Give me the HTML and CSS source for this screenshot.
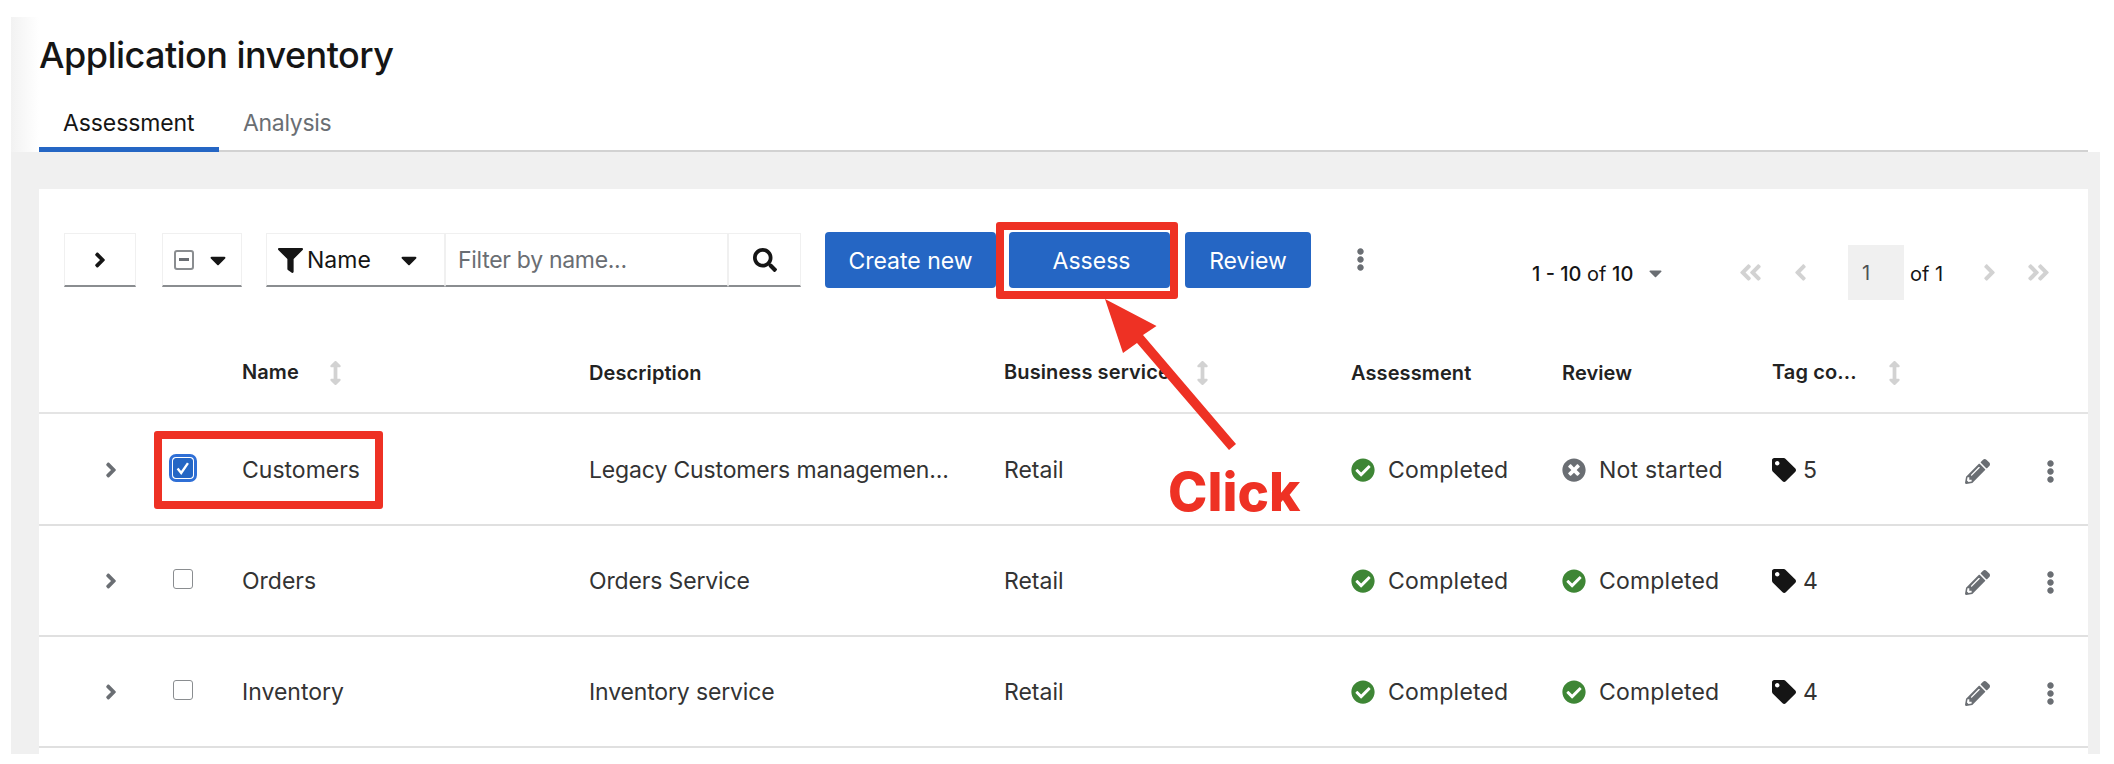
FILE: index.html
```html
<!DOCTYPE html>
<html lang="en">
<head>
    <meta charset="UTF-8">
    <title>Application inventory</title>
    <link rel="stylesheet" href="styles.css">
</head>
<body>
    <svg class="icon-defs" xmlns="http://www.w3.org/2000/svg">
        <symbol id="i-angle-right" viewBox="0 0 256 512"><path d="M224.3 273l-136 136c-9.4 9.4-24.6 9.4-33.9 0l-22.6-22.6c-9.4-9.4-9.4-24.6 0-33.9l96.4-96.4-96.4-96.4c-9.4-9.4-9.4-24.6 0-33.9L54.3 103c9.4-9.4 24.6-9.4 33.9 0l136 136c9.5 9.4 9.5 24.6.1 34z"/></symbol>
        <symbol id="i-angle-left" viewBox="0 0 256 512"><path d="M31.7 239l136-136c9.4-9.4 24.6-9.4 33.9 0l22.6 22.6c9.4 9.4 9.4 24.6 0 33.9L127.9 256l96.4 96.4c9.4 9.4 9.4 24.6 0 33.9L201.7 409c-9.4 9.4-24.6 9.4-33.9 0l-136-136c-9.5-9.4-9.5-24.6-.1-34z"/></symbol>
        <symbol id="i-double-left" viewBox="0 0 448 512"><path d="M223.7 239l136-136c9.4-9.4 24.6-9.4 33.9 0l22.6 22.6c9.4 9.4 9.4 24.6 0 33.9L319.9 256l96.4 96.4c9.4 9.4 9.4 24.6 0 33.9L393.7 409c-9.4 9.4-24.6 9.4-33.9 0l-136-136c-9.5-9.4-9.5-24.6-.1-34zm-192 34l136 136c9.4 9.4 24.6 9.4 33.9 0l22.6-22.6c9.4-9.4 9.4-24.6 0-33.9L127.9 256l96.4-96.4c9.4-9.4 9.4-24.6 0-33.9L201.7 103c-9.4-9.4-24.6-9.4-33.9 0l-136 136c-9.5 9.4-9.5 24.6-.1 34z"/></symbol>
        <symbol id="i-double-right" viewBox="0 0 448 512"><path d="M224.3 273l-136 136c-9.4 9.4-24.6 9.4-33.9 0l-22.6-22.6c-9.4-9.4-9.4-24.6 0-33.9l96.4-96.4-96.4-96.4c-9.4-9.4-9.4-24.6 0-33.9L54.3 103c9.4-9.4 24.6-9.4 33.9 0l136 136c9.5 9.4 9.5 24.6.1 34zm192-34l-136-136c-9.4-9.4-24.6-9.4-33.9 0l-22.6 22.6c-9.4 9.4-9.4 24.6 0 33.9l96.4 96.4-96.4 96.4c-9.4 9.4-9.4 24.6 0 33.9l22.6 22.6c9.4 9.4 24.6 9.4 33.9 0l136-136c9.4-9.2 9.4-24.4 0-33.8z"/></symbol>
        <symbol id="i-caret" viewBox="0 0 320 512"><path d="M31.3 192h257.3c17.8 0 26.7 21.5 14.1 34.1L174.1 354.8c-7.8 7.8-20.5 7.8-28.3 0L17.2 226.1C4.6 213.5 13.5 192 31.3 192z"/></symbol>
        <symbol id="i-filter" viewBox="0 0 512 512"><path d="M487.976 0H24.028C2.71 0-8.047 25.866 7.058 40.971L192 225.941V432c0 7.831 3.821 15.17 10.237 19.662l80 55.98C298.02 518.69 320 507.493 320 487.98V225.941l184.947-184.97C520.021 25.896 509.338 0 487.976 0z"/></symbol>
        <symbol id="i-search" viewBox="0 0 512 512"><path d="M505 442.7L405.3 343c-4.5-4.5-10.6-7-17-7H372c27.6-35.3 44-79.7 44-128C416 93.1 322.9 0 208 0S0 93.1 0 208s93.1 208 208 208c48.3 0 92.7-16.4 128-44v16.3c0 6.4 2.5 12.5 7 17l99.7 99.7c9.4 9.4 24.6 9.4 33.9 0l28.3-28.3c9.4-9.4 9.4-24.6.1-34zM208 336c-70.7 0-128-57.2-128-128 0-70.7 57.2-128 128-128 70.7 0 128 57.2 128 128 0 70.7-57.2 128-128 128z"/></symbol>
        <symbol id="i-kebab" viewBox="0 0 192 512"><path d="M96 184c39.8 0 72 32.2 72 72s-32.2 72-72 72-72-32.2-72-72 32.2-72 72-72zM24 80c0 39.8 32.2 72 72 72s72-32.2 72-72S135.8 8 96 8 24 40.2 24 80zm0 352c0 39.8 32.2 72 72 72s72-32.2 72-72-32.2-72-72-72-72 32.2-72 72z"/></symbol>
        <symbol id="i-check" viewBox="0 0 512 512"><path d="M504 256c0 136.967-111.033 248-248 248S8 392.967 8 256 119.033 8 256 8s248 111.033 248 248zM227.314 387.314l184-184c6.248-6.248 6.248-16.379 0-22.627l-22.627-22.627c-6.248-6.249-16.379-6.249-22.628 0L216 308.118l-70.059-70.059c-6.248-6.248-16.379-6.248-22.628 0l-22.627 22.627c-6.248 6.248-6.248 16.379 0 22.627l104 104c6.249 6.249 16.379 6.249 22.628.001z"/></symbol>
        <symbol id="i-times" viewBox="0 0 512 512"><path d="M256 8C119 8 8 119 8 256s111 248 248 248 248-111 248-248S393 8 256 8zm121.6 313.1c4.7 4.7 4.7 12.3 0 17L338 377.6c-4.7 4.7-12.3 4.7-17 0L256 312l-65.1 65.6c-4.7 4.7-12.3 4.7-17 0L134.4 338c-4.7-4.7-4.7-12.3 0-17l65.6-65-65.6-65.1c-4.7-4.7-4.7-12.3 0-17l39.6-39.6c4.7-4.7 12.3-4.7 17 0l65 65.7 65.1-65.6c4.7-4.7 12.3-4.7 17 0l39.6 39.6c4.7 4.7 4.7 12.3 0 17L312 256l65.6 65.1z"/></symbol>
        <symbol id="i-tag" viewBox="0 0 512 512"><path d="M0 252.118V48C0 21.49 21.49 0 48 0h204.118a48 48 0 0 1 33.941 14.059l211.882 211.882c18.745 18.745 18.745 49.137 0 67.882L293.823 497.941c-18.745 18.745-49.137 18.745-67.882 0L14.059 286.059A48 48 0 0 1 0 252.118zM112 64c-26.51 0-48 21.49-48 48s21.49 48 48 48 48-21.49 48-48-21.49-48-48-48z"/></symbol>
        <symbol id="i-pencil" viewBox="0 0 512 512"><path d="M497.9 142.1l-46.1 46.1c-4.7 4.7-12.3 4.7-17 0l-111-111c-4.7-4.7-4.7-12.3 0-17l46.1-46.1c18.7-18.7 49.1-18.7 67.9 0l60.1 60.1c18.8 18.7 18.8 49.1 0 67.9zM284.2 99.8L21.6 362.4.4 483.9c-2.9 16.4 11.4 30.6 27.8 27.8l121.5-21.3 262.6-262.6c4.7-4.7 4.7-12.3 0-17l-111-111c-4.8-4.7-12.4-4.7-17.1 0zM124.1 339.9c-5.5-5.5-5.5-14.3 0-19.8l154-154c5.5-5.5 14.3-5.5 19.8 0s5.5 14.3 0 19.8l-154 154c-5.5 5.5-14.3 5.5-19.8 0zM88 424h48v36.3l-64.5 11.3-31.1-31.1L51.7 376H88v48z"/></symbol>
        <symbol id="i-sort" viewBox="0 0 256 512"><path d="M214.059 377.941H168V134.059h46.059c21.382 0 32.09-25.851 16.971-40.971L144.971 7.029c-9.373-9.373-24.568-9.373-33.941 0L24.971 93.088c-15.119 15.119-4.411 40.971 16.971 40.971H88v243.882H41.941c-21.382 0-32.09 25.851-16.971 40.971l86.059 86.059c9.373 9.373 24.568 9.373 33.941 0l86.059-86.059c15.119-15.12 4.411-40.971-16.971-40.971z"/></symbol>
    </svg>

    <div class="frame">
        <!-- page header -->
        <header class="page-head">
            <h1>Application inventory</h1>
            <nav class="tabs">
                <a class="tab active">Assessment</a>
                <a class="tab">Analysis</a>
            </nav>
        </header>

        <main class="content">
            <section class="card">
                <!-- toolbar -->
                <div class="toolbar">
                    <div class="ctl ctl-toggle"><svg class="ic-chevron"><use href="#i-angle-right"/></svg></div>
                    <div class="ctl ctl-select">
                        <span class="bulk-box"></span>
                        <svg class="ic-caret"><use href="#i-caret"/></svg>
                    </div>
                    <div class="filter">
                        <div class="ctl ctl-attr">
                            <svg class="ic-filter"><use href="#i-filter"/></svg>
                            <span class="attr-name">Name</span>
                            <svg class="ic-caret"><use href="#i-caret"/></svg>
                        </div>
                        <div class="ctl ctl-input">Filter by name...</div>
                        <div class="ctl ctl-search"><svg class="ic-search"><use href="#i-search"/></svg></div>
                    </div>
                    <button class="btn btn-create">Create new</button>
                    <button class="btn btn-assess">Assess</button>
                    <button class="btn btn-review">Review</button>
                    <svg class="ic-kebab toolbar-kebab"><use href="#i-kebab"/></svg>

                    <div class="pager">
                        <span class="pager-count"><b>1 - 10</b> of <b>10</b></span>
                        <svg class="ic-caret pager-caret"><use href="#i-caret"/></svg>
                        <svg class="ic-page ic-first"><use href="#i-double-left"/></svg>
                        <svg class="ic-page ic-prev"><use href="#i-angle-left"/></svg>
                        <span class="page-input">1</span>
                        <span class="page-of">of 1</span>
                        <svg class="ic-page ic-next"><use href="#i-angle-right"/></svg>
                        <svg class="ic-page ic-last"><use href="#i-double-right"/></svg>
                    </div>
                </div>

                <!-- table -->
                <table class="apps">
                    <colgroup>
                        <col class="c-expand"><col class="c-check"><col class="c-name"><col class="c-desc">
                        <col class="c-biz"><col class="c-assess"><col class="c-review"><col class="c-tag"><col class="c-actions">
                    </colgroup>
                    <thead>
                        <tr>
                            <th></th>
                            <th></th>
                            <th>Name<svg class="ic-sort sort-name"><use href="#i-sort"/></svg></th>
                            <th>Description</th>
                            <th>Business service<svg class="ic-sort sort-biz"><use href="#i-sort"/></svg></th>
                            <th>Assessment</th>
                            <th>Review</th>
                            <th>Tag co...<svg class="ic-sort sort-tag"><use href="#i-sort"/></svg></th>
                            <th></th>
                        </tr>
                    </thead>
                    <tbody>
                        <tr>
                            <td class="cell-expand"><svg class="ic-expand"><use href="#i-angle-right"/></svg></td>
                            <td class="cell-check"><span class="checkbox checked"><svg viewBox="0 0 20 20"><path d="M4 10.5l4 5 7.5-11" fill="none" stroke="#fff" stroke-width="2.6"/></svg></span></td>
                            <td>Customers</td>
                            <td class="cell-desc">Legacy Customers managemen...</td>
                            <td>Retail</td>
                            <td><span class="status"><svg class="ic-status ok"><use href="#i-check"/></svg>Completed</span></td>
                            <td><span class="status"><svg class="ic-status none"><use href="#i-times"/></svg>Not started</span></td>
                            <td><span class="tags"><svg class="ic-tag"><use href="#i-tag"/></svg>5</span></td>
                            <td class="cell-actions"><svg class="ic-pencil"><use href="#i-pencil"/></svg><svg class="ic-kebab"><use href="#i-kebab"/></svg></td>
                        </tr>
                        <tr>
                            <td class="cell-expand"><svg class="ic-expand"><use href="#i-angle-right"/></svg></td>
                            <td class="cell-check"><span class="checkbox"></span></td>
                            <td>Orders</td>
                            <td class="cell-desc">Orders Service</td>
                            <td>Retail</td>
                            <td><span class="status"><svg class="ic-status ok"><use href="#i-check"/></svg>Completed</span></td>
                            <td><span class="status"><svg class="ic-status ok"><use href="#i-check"/></svg>Completed</span></td>
                            <td><span class="tags"><svg class="ic-tag"><use href="#i-tag"/></svg>4</span></td>
                            <td class="cell-actions"><svg class="ic-pencil"><use href="#i-pencil"/></svg><svg class="ic-kebab"><use href="#i-kebab"/></svg></td>
                        </tr>
                        <tr>
                            <td class="cell-expand"><svg class="ic-expand"><use href="#i-angle-right"/></svg></td>
                            <td class="cell-check"><span class="checkbox"></span></td>
                            <td>Inventory</td>
                            <td class="cell-desc">Inventory service</td>
                            <td>Retail</td>
                            <td><span class="status"><svg class="ic-status ok"><use href="#i-check"/></svg>Completed</span></td>
                            <td><span class="status"><svg class="ic-status ok"><use href="#i-check"/></svg>Completed</span></td>
                            <td><span class="tags"><svg class="ic-tag"><use href="#i-tag"/></svg>4</span></td>
                            <td class="cell-actions"><svg class="ic-pencil"><use href="#i-pencil"/></svg><svg class="ic-kebab"><use href="#i-kebab"/></svg></td>
                        </tr>
                    </tbody>
                </table>
            </section>
        </main>
    </div>

    <!-- red annotations drawn on top of the screenshot -->
    <div class="mark mark-assess"></div>
    <div class="mark mark-row"></div>
    <svg class="mark-arrow" viewBox="0 0 150 160"><polygon points="5,3 56.5,30 43,39 136,148 129,154 37,47 23,57"/></svg>
    <div class="mark-label">Click</div>
</body>
</html>
```

FILE: styles.css
```css
* {
    box-sizing: border-box;
}
body {
    margin: 0;
    background-color: #fff;
    font-family: Inter, "Noto Sans", Arial, sans-serif;
    color: #151515;
    font-size: 23px;
    position: relative;
    height: 764px;
    overflow: hidden;
}
svg {
    fill: currentColor;
    flex: none;
}
.icon-defs {
    display: none;
}

.frame {
    margin: 17px 14px 0 11px;
    height: 737px;
    display: flex;
    flex-direction: column;
}

/* header */
.page-head {
    height: 135px;
    padding-left: 28px;
    background: linear-gradient(to right, #f2f2f2, #fff 28px);
    flex: none;
}
h1 {
    margin: 0;
    padding-top: 15px;
    font-size: 36px;
    line-height: 46px;
    font-weight: 500;
    letter-spacing: -0.55px;
}
.tabs {
    display: flex;
    margin-top: 19px;
    margin-right: 12px;
    height: 55px;
    border-bottom: 2px solid #d2d2d2;
}
.tab {
    width: 180px;
    padding-left: 24px;
    padding-top: 12px;
    color: #6a6e73;
    height: 55px;
    letter-spacing: -0.1px;
}
.tab + .tab {
    width: auto;
    padding-left: 24px;
    letter-spacing: -0.3px;
}
.tab.active {
    color: #151515;
    border-bottom: 5px solid #2566c4;
}

/* page body */
.content {
    flex: 1;
    min-height: 0;
    background-color: #f0f0f0;
    padding: 37px 12px 0 28px;
    overflow: hidden;
}
.card {
    background-color: #fff;
    height: 100%;
}

/* toolbar */
.toolbar {
    height: 141px;
    padding: 44px 0 0 25px;
    display: flex;
    align-items: flex-start;
}
.ctl {
    height: 54px;
    display: flex;
    align-items: center;
    padding-top: 1px;
    border: 1px solid #f0f0f0;
    border-bottom: 2px solid #8a8d90;
}
.ctl-toggle {
    width: 72px;
    justify-content: center;
    margin-right: 26px;
}
.ic-chevron {
    width: 12px;
    height: 24px;
}
.ctl-select {
    width: 80px;
    padding-left: 11px;
    margin-right: 24px;
}
.bulk-box {
    width: 20px;
    height: 20px;
    border: 2px solid #8a8d90;
    border-radius: 3px;
    position: relative;
    margin-right: 16px;
}
.bulk-box::after {
    content: "";
    position: absolute;
    left: 3px;
    right: 3px;
    top: 6px;
    height: 3px;
    background-color: #6a6e73;
}
.ic-caret {
    width: 16px;
    height: 26px;
}
.filter {
    display: flex;
    margin-right: 24px;
}
.ctl-attr {
    width: 179px;
    padding-left: 11px;
}
.ic-filter {
    width: 25px;
    height: 25px;
}
.attr-name {
    margin-left: 4px;
    width: 94px;
}
.ctl-input {
    width: 283px;
    padding-left: 12px;
    color: #6a6e73;
    letter-spacing: -0.3px;
}
.ctl-search {
    width: 73px;
    justify-content: center;
}
.ic-search {
    width: 24px;
    height: 24px;
}
.btn {
    height: 56px;
    margin-top: -1px;
    padding: 2px 0 0;
    border: none;
    border-radius: 4px;
    background-color: #2566c4;
    color: #fff;
    font: inherit;
}
.btn-create {
    width: 171px;
    margin-right: 13px;
}
.btn-assess {
    width: 161px;
    padding-left: 4px;
    margin-right: 15px;
}
.btn-review {
    width: 126px;
}
.ic-kebab {
    width: 9px;
    height: 23px;
    color: #6a6e73;
}
.toolbar-kebab {
    margin: 15px 0 0 45px;
}

/* pagination */
.pager {
    margin: 12px 0 0 167px;
    height: 55px;
    display: flex;
    align-items: center;
}
.pager-count {
    width: 100px;
    padding-top: 2px;
    white-space: nowrap;
    font-size: 20px;
}
.pager-count b {
    font-weight: 500;
}
.pager-caret {
    width: 13px;
    height: 22px;
    color: #6a6e73;
    margin-left: 17px;
}
.ic-page {
    height: 27px;
    color: #d2d2d2;
}
.ic-first {
    width: 23px;
    margin-left: 77px;
}
.ic-prev {
    width: 13px;
    margin-left: 32px;
}
.page-input {
    width: 56px;
    height: 55px;
    margin-left: 41px;
    padding-left: 14px;
    padding-top: 1px;
    line-height: 55px;
    font-size: 20px;
    color: #4f5255;
    background-color: #f0f0f0;
}
.page-of {
    width: 40px;
    margin-left: 6px;
    padding-top: 2px;
    font-size: 20px;
}
.ic-next {
    width: 13px;
    margin-left: 33px;
}
.ic-last {
    width: 23px;
    margin-left: 31px;
}

/* table */
.apps {
    width: 2049px;
    table-layout: fixed;
    border-collapse: collapse;
}
.c-expand { width: 114px; }
.c-check { width: 89px; }
.c-name { width: 347px; }
.c-desc { width: 415px; }
.c-biz { width: 347px; }
.c-assess { width: 211px; }
.c-review { width: 210px; }
.c-tag { width: 178px; }
.c-actions { width: 138px; }
.apps th {
    height: 83px;
    padding: 3px 0 0;
    text-align: left;
    font-size: 20px;
    font-weight: 600;
    letter-spacing: 0.1px;
    color: #222;
    white-space: nowrap;
}
.apps thead tr {
    border-bottom: 2px solid #e4e4e4;
}
.apps td {
    height: 111px;
    padding: 1px 0 0;
    white-space: nowrap;
    color: #333;
}
.apps tbody tr:first-child td {
    height: 112px;
}
.apps tbody tr {
    border-bottom: 2px solid #e0e0e0;
}
.apps .cell-desc {
    letter-spacing: -0.15px;
}
.ic-sort {
    width: 13px;
    height: 24px;
    color: #d2d2d2;
    vertical-align: middle;
}
.sort-name { margin-left: 30px; }
.sort-biz { margin-left: 26px; }
.sort-tag { margin-left: 31px; }
.apps .cell-expand {
    padding-left: 66px;
}
.ic-expand {
    width: 12px;
    height: 24px;
    color: #6a6e73;
    display: block;
}
.apps .cell-check {
    padding-left: 20px;
}
.checkbox {
    display: block;
    width: 20px;
    height: 20px;
    margin-bottom: 4px;
    border: 1px solid #8a8d90;
    border-radius: 3px;
}
.checkbox.checked {
    background-color: #2566c4;
    border-color: #2566c4;
    outline: 3px solid #2f6fd6;
    outline-offset: 1px;
}
.checkbox svg {
    display: block;
    width: 18px;
    height: 18px;
}
.status,
.tags {
    display: flex;
    align-items: center;
}
.status {
    letter-spacing: 0.2px;
}
.ic-status {
    width: 24px;
    height: 24px;
    margin-right: 13px;
}
.ic-status.ok {
    color: #3e8635;
}
.ic-status.none {
    color: #6a6e73;
}
.ic-tag {
    width: 24px;
    height: 24px;
    margin-right: 7px;
    color: #151515;
}
.apps .cell-actions {
    padding-left: 15px;
}
.cell-actions svg {
    vertical-align: middle;
}
.ic-pencil {
    width: 25px;
    height: 25px;
    color: #6a6e73;
    margin-right: 56px;
}

/* annotations */
.mark {
    position: absolute;
    border: 8px solid #ee3124;
    border-radius: 3px;
}
.mark-assess {
    left: 996px;
    top: 222px;
    width: 182px;
    height: 77px;
}
.mark-row {
    left: 154px;
    top: 431px;
    width: 229px;
    height: 78px;
}
.mark-arrow {
    position: absolute;
    left: 1100px;
    top: 296px;
    width: 150px;
    height: 160px;
    fill: #ee3124;
}
.mark-label {
    position: absolute;
    left: 1168px;
    top: 460px;
    font-size: 53px;
    line-height: 64px;
    font-weight: 800;
    color: #ee3124;
}
```
